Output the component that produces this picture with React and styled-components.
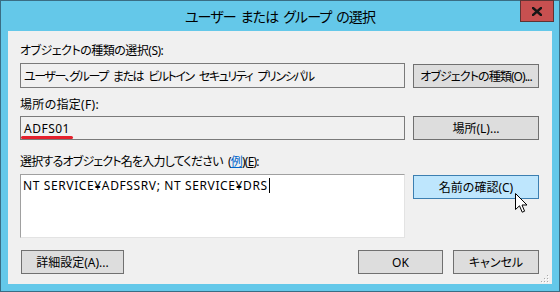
import React from "react";
import styled, { createGlobalStyle } from "styled-components";

const GlobalStyle = createGlobalStyle`
  html, body {
    margin: 0;
    padding: 0;
    background: #ffffff;
  }
  body {
    font-family: "Noto Sans", "Noto Sans CJK JP", sans-serif;
  }
`;

const Window = styled.div`
  box-sizing: border-box;
  width: 560px;
  height: 292px;
  border: 1px solid #3a6d84;
  background: #64c8e9;
  padding: 0 7px 7px;
  display: flex;
  flex-direction: column;
  position: relative;
  font-family: "Noto Sans", "Noto Sans CJK JP", sans-serif;
  font-feature-settings: "palt";
  color: #000;
`;

const TitleBar = styled.div`
  height: 30px;
  flex: none;
  display: flex;
  align-items: center;
  justify-content: center;
  font-size: 14px;
  letter-spacing: -0.85px;
  word-spacing: 2px;
  line-height: 18px;
  padding-top: 1px;
  box-sizing: border-box;
`;

const CloseButton = styled.div`
  position: absolute;
  top: -1px;
  right: 5px;
  box-sizing: border-box;
  width: 34px;
  height: 22px;
  background: #c75050;
  border: 1px solid #5e3434;
  display: flex;
  align-items: center;
  justify-content: center;
`;

const Client = styled.div`
  flex: 1;
  background: #f0f0f0;
  position: relative;
  padding: 0 13px 0 12px;
  display: flex;
  flex-direction: column;
`;

const Label = styled.div`
  font-size: 12px;
  line-height: 16px;
  height: 16px;
  letter-spacing: ${(p) => p.$ls || 0}px;
  word-spacing: 3px;
  margin: ${(p) => p.$top}px 0 ${(p) => p.$bottom}px;
  white-space: nowrap;
`;

const Row = styled.div`
  display: grid;
  grid-template-columns: 385px 126px;
  column-gap: 8px;
  align-items: start;
`;

const Field = styled.div`
  box-sizing: border-box;
  height: ${(p) => p.$h}px;
  border: 1px solid #7a7a7a;
  background: #f0f0f0;
  padding: 0 3px;
  font-size: 12px;
  letter-spacing: ${(p) => p.$ls || 0}px;
  word-spacing: 3.5px;
  display: flex;
  align-items: center;
  white-space: pre;
`;

const Marked = styled.span`
  position: relative;
  letter-spacing: 0.5px;

  &::after {
    content: "";
    position: absolute;
    left: -3px;
    right: -3px;
    bottom: -2px;
    height: 3px;
    border-radius: 2px;
    background: #e4202c;
  }
`;

const TextArea = styled.div`
  box-sizing: border-box;
  height: 64px;
  border: 1px solid;
  border-color: #a0a0a0 #e3e3e3 #e3e3e3 #a0a0a0;
  background: #ffffff;
  padding: 3px 2px;
  font-size: 12px;
  line-height: 16px;
  letter-spacing: 0.62px;
  white-space: nowrap;
`;

const Caret = styled.span`
  display: inline-block;
  width: 1px;
  height: 15px;
  background: #000;
  vertical-align: -3px;
  margin-left: 1px;
`;

const Button = styled.button`
  box-sizing: border-box;
  width: ${(p) => p.$w}px;
  height: 24px;
  margin-top: ${(p) => p.$mt || 0}px;
  border: 1px solid ${(p) => (p.$hover ? "#3c7fb1" : "#707070")};
  background: ${(p) => (p.$hover ? "#bee6fd" : "#dddddd")};
  font-family: inherit;
  font-feature-settings: "palt";
  font-size: 12px;
  letter-spacing: ${(p) => p.$ls || 0}px;
  color: #000;
  padding: 0;
  white-space: nowrap;
`;

const Footer = styled.div`
  display: flex;
  align-items: center;
  gap: 10px;
  margin-top: 12px;
  padding-left: 1px;
`;

const Spacer = styled.div`
  flex: 1;
`;

const LinkText = styled.span`
  color: #0066cc;
  text-decoration: underline;
`;

const Key = styled.span`
  text-decoration: underline;
`;

const Pointer = styled.svg`
  position: absolute;
  left: 507px;
  top: 162px;
`;

const Grip = styled.svg`
  position: absolute;
  right: 3px;
  bottom: 1px;
`;

function GripDots() {
  const dots = [
    [6, 0],
    [3, 3],
    [6, 3],
    [0, 6],
    [3, 6],
    [6, 6],
  ];
  return (
    <Grip width="8" height="8" viewBox="0 0 8 8">
      {dots.map(([x, y], i) => (
        <g key={i}>
          <rect x={x + 1} y={y + 1} width="1" height="1" fill="#ffffff" />
          <rect x={x} y={y} width="1" height="1" fill="#a8a8a8" />
        </g>
      ))}
    </Grip>
  );
}

export default function App() {
  return (
    <>
      <GlobalStyle />
      <Window>
        <TitleBar>ユーザー または グループ の選択</TitleBar>
        <CloseButton>
          <svg width="10" height="9" viewBox="0 0 10 9">
            <path
              d="M1 1 L9 8 M9 1 L1 8"
              stroke="#161616"
              strokeWidth="2.4"
              strokeLinecap="square"
            />
          </svg>
        </CloseButton>

        <Client>
          <Label $top={12} $bottom={4} $ls={-0.5}>
            オブジェクトの種類の選択(S):
          </Label>
          <Row>
            <Field $h={25} $ls={-1.45}>
              ユーザー、グループ または ビルトイン セキュリティ プリンシパル
            </Field>
            <Button $w={126} $mt={1} $ls={-0.9}>
              オブジェクトの種類(O)...
            </Button>
          </Row>

          <Label $top={9} $bottom={3} $ls={0.3}>
            場所の指定(F):
          </Label>
          <Row>
            <Field $h={24}>
              <Marked>ADFS01</Marked>
            </Field>
            <Button $w={126}>場所(L)...</Button>
          </Row>

          <Label $top={14} $bottom={4} $ls={-0.8}>
            選択するオブジェクト名を入力してください (<LinkText>例</LinkText>)(
            <Key>E</Key>):
          </Label>
          <Row>
            <TextArea>
              NT SERVICE¥ADFSSRV; NT SERVICE¥DRS
              <Caret />
            </TextArea>
            <Button $w={126} $mt={1} $hover>
              名前の確認(C)
            </Button>
          </Row>

          <Footer>
            <Button $w={103}>詳細設定(A)...</Button>
            <Spacer />
            <Button $w={85}>OK</Button>
            <Button $w={86}>キャンセル</Button>
          </Footer>

          <Pointer width="13" height="21" viewBox="0 0 13 21">
            <path
              d="M0.5 0.5 L0.5 16.5 L4.5 12.8 L7.2 19.2 L9.6 18.2 L7 12 L12 12 Z"
              fill="#ffffff"
              stroke="#000000"
              strokeWidth="1"
              strokeLinejoin="miter"
            />
          </Pointer>
          <GripDots />
        </Client>
      </Window>
    </>
  );
}
